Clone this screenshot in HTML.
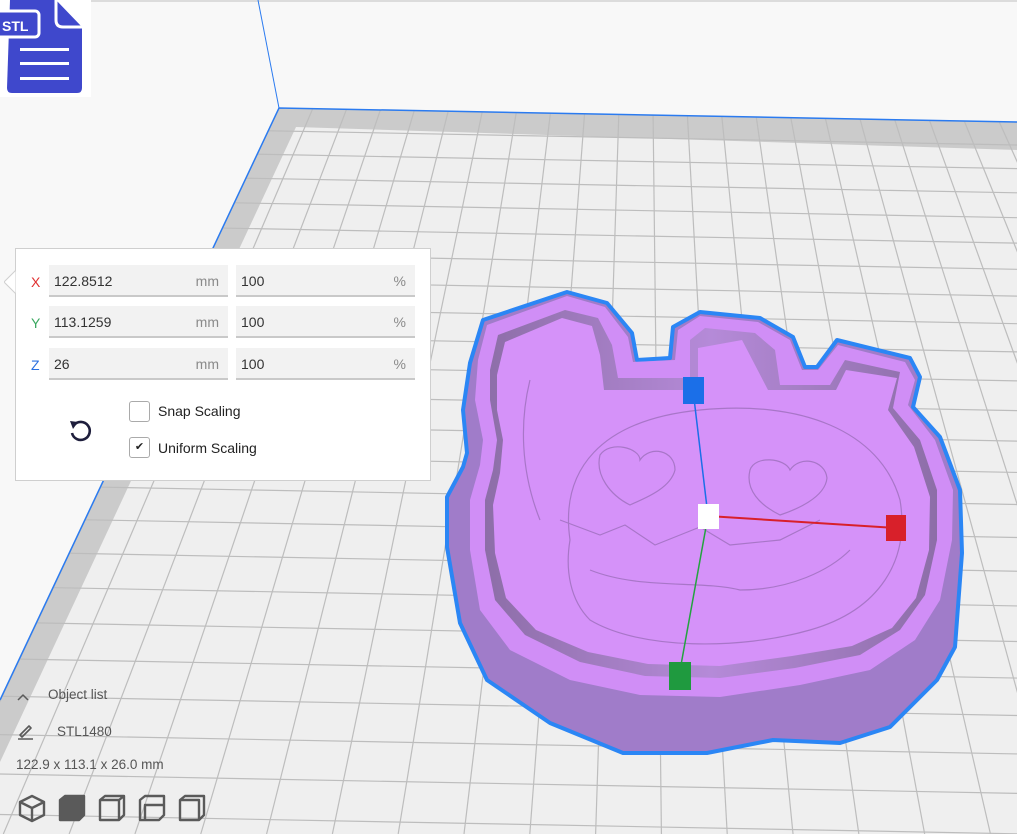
<!DOCTYPE html>
<html><head><meta charset="utf-8"><style>
html,body{margin:0;padding:0;width:1017px;height:834px;overflow:hidden;background:#f8f8f8;font-family:"Liberation Sans",sans-serif}
svg{position:absolute;left:0;top:0}
.panel{position:absolute;left:15px;top:248px;width:416px;height:233px;background:#fff;border:1px solid #cfcfcf;box-sizing:border-box}
.lab{position:absolute;font-size:14px;left:31px}
.fld{position:absolute;height:32px;background:#f2f2f2;border-bottom:2px solid #c9c9c9;box-sizing:border-box;font-size:14px;color:#333;line-height:32px}
.fld span{position:absolute;right:9px;color:#8a8a8a}
.fld b{font-weight:normal;position:absolute;left:5px}
.cb{position:absolute;left:129px;width:21px;height:21px;border:1px solid #aaa;border-radius:3px;box-sizing:border-box;background:#fff}
.ct{position:absolute;left:158px;font-size:14px;color:#222}
.t{position:absolute;font-size:13.5px;color:#555}
</style></head><body>
<svg width="1017" height="834" id="scene">
 <defs><clipPath id="pl"><polygon points="279,108 1017,122 1017,834 0,834 0,700"/></clipPath>
 <linearGradient id="wall" x1="0" y1="0" x2="1" y2="0"><stop offset="0" stop-color="#8d6ea8"/><stop offset="0.5" stop-color="#b58ad8"/><stop offset="1" stop-color="#8d6ea8"/></linearGradient></defs>
 <rect x="0" y="0" width="1017" height="2" fill="#dcdcdc"/>
 <line x1="258" y1="0" x2="279" y2="108" stroke="#2b7bf0" stroke-width="1"/>
 <polygon points="279,108 1017,122 1017,834 0,834 0,700" fill="#cbcbcb"/>
 <polygon points="296,127 1017,150 1017,834 0,834 0,762 " fill="#efefef"/>
 <g id="grid" clip-path="url(#pl)" stroke="#bdbdbd" stroke-width="1.2"></g>
 <polyline points="0,700 279,108 1017,122" fill="none" stroke="#2b7bf0" stroke-width="1.5"/>
 <path d="M470,363 L483,320 L567,292 L607,303 L632,333 L637,360 L670,358 L673,327 L700,312 L760,318 L793,337 L805,367 L817,367 L837,340 L910,358 L920,377 L913,407 L940,437 L960,490 L962,553 L955,647 L937,680 L890,727 L840,743 L773,740 L707,753 L623,753 L550,723 L487,680 L460,623 L447,547 L447,497 L463,467 L467,453 L463,410 Z" fill="#a07cc9" stroke="#2b86f5" stroke-width="4" stroke-linejoin="round"/>
 <path d="M478,360 L487,325 L567,296 L605,307 L628,337 L633,362 L675,360 L678,330 L700,316 L758,322 L790,340 L802,370 L818,370 L838,345 L905,362 L915,380 L908,405 L935,440 L953,490 L952,540 L940,600 L915,640 L870,670 L800,685 L720,697 L640,695 L570,680 L510,650 L480,610 L470,550 L470,500 L480,465 L483,440 L475,400 Z" fill="#d08ef6"/>
 <path d="M490,370 L498,335 L565,310 L598,318 L612,345 L618,378 L690,378 L690,340 L705,328 L755,333 L775,350 L780,385 L830,385 L845,360 L900,372 L893,408 L920,440 L937,490 L937,540 L925,595 L900,630 L860,655 L795,668 L720,678 L645,676 L580,662 L525,635 L495,600 L485,550 L485,500 L493,470 L497,440 L490,400 Z" fill="url(#wall)"/>
 <path d="M497,375 L505,342 L562,318 L592,326 L600,355 L604,390 L698,390 L698,348 L742,340 L768,390 L836,390 L846,370 L897,378 L888,410 L914,447 L930,497 L929,550 L916,598 L892,628 L852,646 L792,656 L720,666 L648,664 L588,652 L536,630 L506,598 L495,553 L493,505 L500,473 L503,440 L497,410 Z" fill="#d592f9"/>
 <g fill="none" stroke="#a876c8" stroke-width="1.2">
  <path d="M570,540 C560,470 600,420 700,410 C800,400 880,430 900,500 C910,560 880,610 810,630 C740,650 640,650 590,620 C570,600 565,570 570,540Z"/>
  <path d="M600,455 C610,440 640,448 640,460 C650,445 675,450 675,470 C670,490 640,500 630,505 C610,495 595,475 600,455Z"/>
  <path d="M750,470 C755,455 785,458 790,470 C800,455 825,460 827,478 C825,498 795,510 780,515 C760,505 745,490 750,470Z"/>
  <path d="M560,520 L600,535 L625,525 L655,545 L700,527 L730,545 L780,540 L820,520"/>
  <path d="M590,570 C640,590 700,580 740,590 C790,590 830,570 850,550"/>
  <path d="M530,380 C520,420 520,470 540,520"/>
 </g>
 <line x1="693" y1="390" x2="708" y2="516" stroke="#1b6fe8" stroke-width="1.5"/>
 <line x1="708" y1="516" x2="896" y2="528" stroke="#d8202a" stroke-width="2"/>
 <line x1="708" y1="516" x2="679" y2="676" stroke="#24a340" stroke-width="1.5"/>
 <rect x="683" y="377" width="21" height="27" fill="#1b6fe8"/>
 <rect x="698" y="504" width="21" height="25" fill="#ffffff"/>
 <rect x="886" y="515" width="20" height="26" fill="#d8202a"/>
 <rect x="669" y="662" width="22" height="28" fill="#1f9a3f"/>
 <rect x="0" y="0" width="91" height="97" fill="#fff"/>
 <path d="M10,0 L56,0 L82,27 L82,88 Q82,93 77,93 L12,93 Q7,93 7,88 Z" fill="#3f48cc"/>
 <path d="M56,0 L56,20 Q56,27 63,27 L82,27" fill="none" stroke="#fff" stroke-width="3"/>
 <rect x="-5" y="11" width="44" height="26" rx="4" fill="#3f48cc" stroke="#fff" stroke-width="3"/>
 <text x="2" y="31" font-family="Liberation Sans" font-weight="bold" font-size="14" fill="#fff">STL</text>
 <rect x="20" y="48" width="49" height="3" fill="#fff"/><rect x="20" y="62" width="49" height="3" fill="#fff"/><rect x="20" y="77" width="49" height="3" fill="#fff"/>
 <g fill="none" stroke="#5a5a5a" stroke-width="2.4" stroke-linejoin="round">
  <path d="M20,815 L20,802 L32,796 L44,802 L44,815 L32,821 Z M20,802 L32,808 L44,802 M32,808 L32,821"/>
  <path d="M60,800 L65,796 L84,796 L84,815 L79,820 L60,820 Z" fill="#5a5a5a"/>
  <path d="M100,800 L105,796 L124,796 L124,815 L119,820 L100,820 Z M100,800 L119,800 L119,820 M119,800 L124,796"/>
  <path d="M140,800 L145,796 L164,796 L164,815 L159,820 L140,820 Z M145,805 L164,805 L164,815 L159,820 L145,820 Z"/>
  <path d="M180,800 L185,796 L204,796 L204,815 L199,820 L180,820 Z M180,800 L199,800 L199,820"/>
  <path d="M18,700 L23,695 L28,700" stroke-width="1.5"/>
  <path d="M18,739 L33,739 M20,735 L29,726 L31,728 L22,737 Z" stroke-width="1.6"/>
 </g>
</svg>
<div class="panel"></div>
<svg width="16" height="24" style="left:4px;top:270px"><polygon points="12,0 0,12 12,24" fill="#fff" stroke="#cfcfcf"/><rect x="12" y="0" width="4" height="24" fill="#fff"/></svg>
<div class="lab" style="top:274px;color:#e03030">X</div>
<div class="lab" style="top:315px;color:#3aa860">Y</div>
<div class="lab" style="top:357px;color:#2a70e0">Z</div>
<div class="fld" style="left:49px;top:265px;width:179px"><b>122.8512</b><span>mm</span></div>
<div class="fld" style="left:236px;top:265px;width:179px"><b>100</b><span>%</span></div>
<div class="fld" style="left:49px;top:306px;width:179px"><b>113.1259</b><span>mm</span></div>
<div class="fld" style="left:236px;top:306px;width:179px"><b>100</b><span>%</span></div>
<div class="fld" style="left:49px;top:348px;width:179px"><b>26</b><span>mm</span></div>
<div class="fld" style="left:236px;top:348px;width:179px"><b>100</b><span>%</span></div>
<div class="cb" style="top:401px"></div>
<div class="cb" style="top:437px;font-size:11px;line-height:19px;text-align:center;color:#222">✔</div>
<div class="ct" style="top:403px">Snap Scaling</div>
<div class="ct" style="top:440px">Uniform Scaling</div>
<svg width="30" height="30" style="left:66px;top:416px"><path d="M8,9 A9,9 0 1 1 6,17" fill="none" stroke="#1e1e3c" stroke-width="2.6"/><polygon points="4,5 12,6 7,13" fill="#1e1e3c"/></svg>
<div class="t" style="left:48px;top:687px">Object list</div>
<div class="t" style="left:57px;top:724px">STL1480</div>
<div class="t" style="left:16px;top:757px">122.9 x 113.1 x 26.0 mm</div>
<script>
var g=document.getElementById('grid'),s='';
var vx=644,vy=-668;
for(var k=-30;k<40;k++){var x0=279+34*k;var x1=vx+(x0-vx)*(834-vy)/(108-vy);s+='<line x1="'+x0+'" y1="108" x2="'+x1+'" y2="834"/>';}
var y=108;while(y<900){s+='<line x1="0" y1="'+(y-0.019*279)+'" x2="1017" y2="'+(y+0.019*738)+'"/>';y+=23+0.026*(y-108);}
g.innerHTML=s;
</script>
</body></html>
